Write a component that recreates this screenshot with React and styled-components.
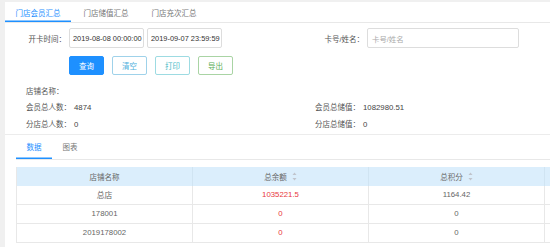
import React from 'react'
import styled, { createGlobalStyle } from 'styled-components'

const GlobalStyle = createGlobalStyle`
  html, body {
    margin: 0;
    padding: 0;
    background: #f0f0f0;
    font-family: "Liberation Sans", "Noto Sans CJK SC", sans-serif;
    font-size: 7.5px;
    color: #555;
  }
`

const Page = styled.div`
  height: 247px;
  padding: 2px 0 0 5px;
  box-sizing: border-box;
  overflow: hidden;
`

const Panel = styled.div`
  background: #fff;
  height: 100%;
  overflow: hidden;
`

const TabBar = styled.div`
  display: flex;
  gap: 2px;
  height: 20px;
  border-bottom: 1px solid #e8e8e8;
`

const Tab = styled.div`
  width: 66px;
  display: flex;
  align-items: center;
  justify-content: center;
  color: ${({ active }) => (active ? '#1e90ff' : '#777')};
  box-shadow: ${({ active }) => (active ? 'inset 0 -1.5px 0 #1e90ff' : 'none')};
`

const FilterRow = styled.div`
  display: flex;
  align-items: center;
  margin-top: 5px;
  height: 20px;
`

const Label = styled.span`
  width: ${({ w }) => w}px;
  margin-left: ${({ offset }) => offset || 0}px;
  text-align: right;
  color: #555;
  padding-right: 3px;
  flex-shrink: 0;
  white-space: nowrap;
`

const Input = styled.div`
  width: ${({ w }) => w}px;
  height: 20px;
  box-sizing: border-box;
  border: 1px solid #ddd;
  border-radius: 2px;
  margin-right: 3px;
  display: flex;
  align-items: center;
  padding-left: ${({ placeholder }) => (placeholder ? '4px' : '3px')};
  white-space: nowrap;
  overflow: hidden;
  flex-shrink: 0;
  color: ${({ placeholder }) => (placeholder ? '#aaa' : '#333')};
  font-size: 7.4px;
`

const ButtonRow = styled.div`
  display: flex;
  gap: 8px;
  padding-left: 64px;
  margin-top: 8px;
`

const Button = styled.div`
  width: 35px;
  height: 19px;
  box-sizing: border-box;
  border-radius: 2px;
  display: flex;
  align-items: center;
  justify-content: center;
  background: ${({ fill }) => fill || '#fff'};
  border: 1px solid ${({ edge }) => edge};
  color: ${({ ink }) => ink};
`

const Info = styled.div`
  display: grid;
  grid-template-columns: 289px 1fr;
  grid-auto-rows: 16.5px;
  align-items: center;
  padding: 7px 0 2px 21px;
  border-bottom: 1px solid #ececec;
`

const InfoItem = styled.div`
  color: #555;
  white-space: nowrap;
  span {
    margin-left: 3px;
    color: #444;
    font-size: 7.8px;
  }
`

const SubTabs = styled.div`
  display: flex;
  margin: 0 0 0 11px;
  height: 24px;
  border-bottom: 1px solid #e8e8e8;
`

const SubTab = styled.div`
  width: 36px;
  display: flex;
  align-items: center;
  justify-content: center;
  color: ${({ active }) => (active ? '#1e90ff' : '#777')};
  box-shadow: ${({ active }) => (active ? 'inset 0 -1.5px 0 #1e90ff' : 'none')};
`

const Table = styled.div`
  margin: 7px 0 0 11px;
  display: grid;
  grid-template-columns: 176px 176px 176px 60px;
  border-left: 1px solid #e8e8e8;
`

const HeadCell = styled.div`
  height: 19px;
  background: #dbeefc;
  display: flex;
  align-items: center;
  justify-content: center;
  gap: 5px;
  color: #666;
  border-right: 1px solid ${({ last }) => (last ? 'transparent' : '#d0e4f2')};
`

const Cell = styled.div`
  height: 19px;
  box-sizing: border-box;
  display: flex;
  align-items: center;
  justify-content: center;
  color: ${({ red }) => (red ? '#e8383d' : '#666')};
  font-size: 7.8px;
  border-right: 1px solid #e8e8e8;
  border-bottom: 1px solid #e8e8e8;
`

const SortIcon = () => (
  <svg width="5" height="9" viewBox="0 0 5 9">
    <path d="M2.5 0.5 L4.5 3 L0.5 3 Z" fill="#c0c4cc" />
    <path d="M2.5 8.5 L4.5 6 L0.5 6 Z" fill="#c0c4cc" />
  </svg>
)

const rows = [
  ['总店', '1035221.5', '1164.42'],
  ['178001', '0', '0'],
  ['2019178002', '0', '0'],
]

const App = () => (
  <Page>
    <GlobalStyle />
    <Panel>
      <TabBar>
        <Tab active>门店会员汇总</Tab>
        <Tab>门店储值汇总</Tab>
        <Tab>门店充次汇总</Tab>
      </TabBar>

      <FilterRow>
        <Label w={61}>开卡时间：</Label>
        <Input w={75}>2019-08-08 00:00:00</Input>
        <Input w={75}>2019-09-07 23:59:59</Input>
        <Label w={61} offset={78}>卡号/姓名：</Label>
        <Input w={152} placeholder>卡号/姓名</Input>
      </FilterRow>

      <ButtonRow>
        <Button fill="#1e90ff" edge="#1e90ff" ink="#fff">查询</Button>
        <Button edge="#9fd2ea" ink="#4fb0dc">清空</Button>
        <Button edge="#9ddbe2" ink="#45b9c6">打印</Button>
        <Button edge="#a9d4a4" ink="#5aae55">导出</Button>
      </ButtonRow>

      <Info>
        <InfoItem>店铺名称：</InfoItem>
        <InfoItem />
        <InfoItem>会员总人数：<span>4874</span></InfoItem>
        <InfoItem>会员总储值：<span>1082980.51</span></InfoItem>
        <InfoItem>分店总人数：<span>0</span></InfoItem>
        <InfoItem>分店总储值：<span>0</span></InfoItem>
      </Info>

      <SubTabs>
        <SubTab active>数据</SubTab>
        <SubTab>图表</SubTab>
      </SubTabs>

      <Table>
        <HeadCell>店铺名称</HeadCell>
        <HeadCell>总余额<SortIcon /></HeadCell>
        <HeadCell>总积分<SortIcon /></HeadCell>
        <HeadCell last />
        {rows.map(([name, balance, points]) => (
          <React.Fragment key={name}>
            <Cell>{name}</Cell>
            <Cell red>{balance}</Cell>
            <Cell>{points}</Cell>
            <Cell />
          </React.Fragment>
        ))}
      </Table>
    </Panel>
  </Page>
)

export default App
